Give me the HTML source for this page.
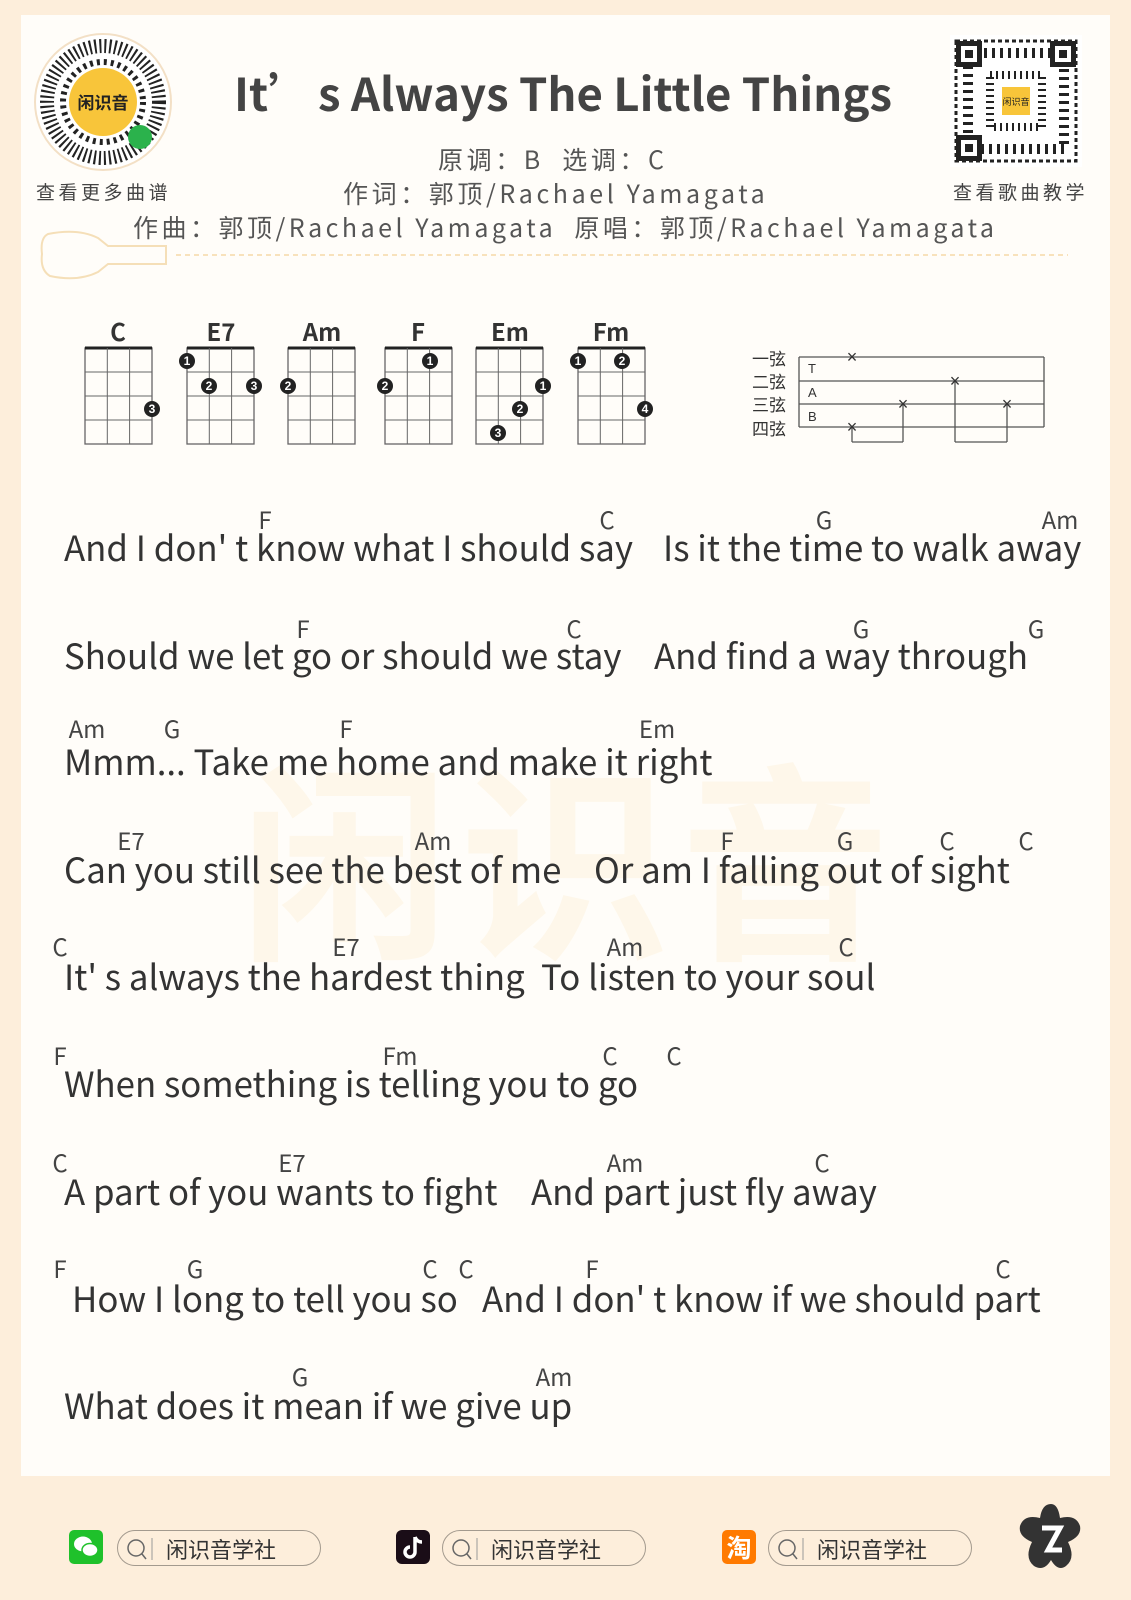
<!DOCTYPE html>
<html><head><meta charset="utf-8"><style>
body{margin:0;width:1131px;height:1600px;background:#fdeedb;position:relative;overflow:hidden;font-family:"Liberation Sans","Noto Sans CJK SC",sans-serif;}
.panel{position:absolute;left:21px;top:15px;width:1089px;height:1461px;background:#fffdf9;}
.t{position:absolute;white-space:nowrap;font-family:"Noto Sans CJK SC",sans-serif;color:#333;}
.ly{font-size:34.8px;line-height:40px;margin-top:10px;}
.ch{font-size:24px;line-height:28px;color:#444;transform:translateX(-50%);margin-top:9px;}
.hd{font-size:25px;color:#555;letter-spacing:3.6px;}
.pill{position:absolute;width:204px;height:36px;border:1.5px solid #a39a8e;border-radius:20px;box-sizing:border-box;}
.pill span{position:absolute;left:48px;top:2px;font-family:"Noto Sans CJK SC",sans-serif;font-size:22px;color:#333;}
</style></head><body>
<div class="panel"></div>
<div class="t" style="left:240px;top:700px;font-size:210px;color:rgba(250,205,140,0.13);font-weight:bold;letter-spacing:10px">闲识音</div>

<svg style="position:absolute;left:34px;top:33px" width="138" height="138">
<circle cx="69" cy="69" r="68" fill="#fff" stroke="#f3e0c6" stroke-width="2"/>
<circle cx="69" cy="69" r="56" fill="none" stroke="#222" stroke-width="14" stroke-dasharray="2 3"/>
<circle cx="69" cy="69" r="40" fill="none" stroke="#222" stroke-width="6" stroke-dasharray="3 4"/>
<circle cx="69" cy="69" r="34" fill="#f8c53a"/>
<text x="69" y="76" text-anchor="middle" font-family="Noto Sans CJK SC" font-size="17" font-weight="bold" fill="#222">闲识音</text>
<circle cx="106" cy="104" r="12" fill="#2bb24c"/>
</svg>
<div class="t" style="left:36px;top:178px;font-size:19px;color:#444;letter-spacing:3.5px">查看更多曲谱</div>
<svg style="position:absolute;left:950px;top:35px" width="132" height="132">
<rect width="132" height="132" fill="#fff"/>
<rect x="6" y="6" width="120" height="120" fill="none" stroke="#222" stroke-width="3" stroke-dasharray="4 3"/>
<rect x="18" y="18" width="96" height="96" fill="none" stroke="#222" stroke-width="10" stroke-dasharray="3 5"/>
<rect x="40" y="40" width="52" height="52" fill="none" stroke="#222" stroke-width="8" stroke-dasharray="2 4"/>
<rect x="6" y="6" width="26" height="26" fill="#222"/><rect x="11" y="11" width="16" height="16" fill="#fff"/><rect x="15" y="15" width="8" height="8" fill="#222"/>
<rect x="100" y="6" width="26" height="26" fill="#222"/><rect x="105" y="11" width="16" height="16" fill="#fff"/><rect x="109" y="15" width="8" height="8" fill="#222"/>
<rect x="6" y="100" width="26" height="26" fill="#222"/><rect x="11" y="105" width="16" height="16" fill="#fff"/><rect x="15" y="109" width="8" height="8" fill="#222"/>
<rect x="52" y="52" width="28" height="28" fill="#f8c53a"/>
<text x="66" y="70" text-anchor="middle" font-family="Noto Sans CJK SC" font-size="9" fill="#222">闲识音</text>
</svg>
<div class="t" style="left:953px;top:178px;font-size:19px;color:#444;letter-spacing:3.5px">查看歌曲教学</div>

<div class="t" style="left:234px;top:59px;font-size:45.5px;font-weight:bold;color:#444">It’<span style="margin-left:-6px"> </span>s Always The Little Things</div>
<div class="t hd" style="left:438px;top:141px">原调：B&nbsp; 选调：C</div>
<div class="t hd" style="left:343px;top:175px">作词：郭顶/Rachael Yamagata</div>
<div class="t hd" style="left:133px;top:209px;letter-spacing:3.5px">作曲：郭顶/Rachael Yamagata&nbsp; 原唱：郭顶/Rachael Yamagata</div>
<svg style="position:absolute;left:38px;top:228px" width="1060" height="56">
<path d="M10 6 Q2 10 4 26 Q2 42 12 48 Q40 54 60 44 L70 36 L128 36 L128 18 L70 18 L60 10 Q40 0 10 6Z" fill="none" stroke="#f5dfb8" stroke-width="2"/>
<line x1="138" y1="27" x2="1030" y2="27" stroke="#f5d9a8" stroke-width="1.5" stroke-dasharray="5 4"/>
</svg>

<svg style="position:absolute;left:0;top:308px" width="1131" height="150">
<defs>
<g id="gr"><rect x="0" y="40" width="67" height="96" fill="none" stroke="#666" stroke-width="1.3"/><line x1="0" y1="40" x2="67" y2="40" stroke="#222" stroke-width="3"/>
<line x1="22.3" y1="40" x2="22.3" y2="136" stroke="#666"/><line x1="44.6" y1="40" x2="44.6" y2="136" stroke="#666"/>
<line x1="0" y1="64" x2="67" y2="64" stroke="#666"/><line x1="0" y1="88" x2="67" y2="88" stroke="#666"/><line x1="0" y1="112" x2="67" y2="112" stroke="#666"/></g>
</defs>
<g font-family="Noto Sans CJK SC" font-weight="bold" font-size="24" fill="#333" text-anchor="middle">
<use href="#gr" x="85"/><text x="118" y="33">C</text>
<use href="#gr" x="187"/><text x="221" y="33">E7</text>
<use href="#gr" x="288"/><text x="322" y="33">Am</text>
<use href="#gr" x="385"/><text x="418" y="33">F</text>
<use href="#gr" x="476"/><text x="510" y="33">Em</text>
<use href="#gr" x="578"/><text x="611" y="33">Fm</text>
</g>
<g fill="#222"><circle cx="152" cy="101" r="8"/><circle cx="187" cy="53" r="8"/><circle cx="209" cy="78" r="8"/><circle cx="254" cy="78" r="8"/><circle cx="288" cy="78" r="8"/><circle cx="430" cy="53" r="8"/><circle cx="385" cy="78" r="8"/><circle cx="543" cy="78" r="8"/><circle cx="520" cy="101" r="8"/><circle cx="498" cy="125" r="8"/><circle cx="578" cy="53" r="8"/><circle cx="622" cy="53" r="8"/><circle cx="645" cy="101" r="8"/></g>
<g fill="#fff" font-family="Liberation Sans" font-weight="bold" font-size="12" text-anchor="middle">
<text x="152" y="105">3</text><text x="187" y="57">1</text><text x="209" y="82">2</text><text x="254" y="82">3</text><text x="288" y="82">2</text><text x="430" y="57">1</text><text x="385" y="82">2</text><text x="543" y="82">1</text><text x="520" y="105">2</text><text x="498" y="129">3</text><text x="578" y="57">1</text><text x="622" y="57">2</text><text x="645" y="105">4</text></g>
<g transform="translate(0,7)">
<g stroke="#555" stroke-width="1.3"><line x1="799" y1="42" x2="1044" y2="42"/><line x1="799" y1="66" x2="1044" y2="66"/><line x1="799" y1="89" x2="1044" y2="89"/><line x1="799" y1="112" x2="1044" y2="112"/><line x1="799" y1="42" x2="799" y2="112"/><line x1="1044" y1="42" x2="1044" y2="112"/>
<line x1="852" y1="112" x2="852" y2="127"/><line x1="852" y1="127" x2="903" y2="127"/><line x1="903" y1="89" x2="903" y2="127"/>
<line x1="955" y1="66" x2="955" y2="127"/><line x1="955" y1="127" x2="1007" y2="127"/><line x1="1007" y1="89" x2="1007" y2="127"/></g>
<g font-family="Liberation Sans" font-size="18" fill="#333" text-anchor="middle"><text x="852" y="48">×</text><text x="955" y="72">×</text><text x="903" y="95">×</text><text x="1007" y="95">×</text><text x="852" y="118">×</text></g>
<g font-family="Liberation Sans" font-size="13" fill="#333"><text x="808" y="58">T</text><text x="808" y="82">A</text><text x="808" y="106">B</text></g>
<g font-family="Noto Sans CJK SC" font-size="17" fill="#333"><text x="752" y="50">一弦</text><text x="752" y="73">二弦</text><text x="752" y="96">三弦</text><text x="752" y="120">四弦</text></g>
</g>
</svg>

<div class="t ly" style="left:64px;top:517px">And I don' t know what I should say</div>
<div class="t ly" style="left:663px;top:517px">Is it the time to walk away</div>
<div class="t ch" style="left:265px;top:496px">F</div><div class="t ch" style="left:607px;top:496px">C</div><div class="t ch" style="left:824px;top:496px">G</div><div class="t ch" style="left:1060px;top:496px">Am</div>

<div class="t ly" style="left:64px;top:625px">Should we let go or should we stay</div>
<div class="t ly" style="left:654px;top:625px">And find a way through</div>
<div class="t ch" style="left:303px;top:605px">F</div><div class="t ch" style="left:574px;top:605px">C</div><div class="t ch" style="left:861px;top:605px">G</div><div class="t ch" style="left:1036px;top:605px">G</div>

<div class="t ly" style="left:64px;top:731px">Mmm... Take me home and make it right</div>
<div class="t ch" style="left:87px;top:705px">Am</div><div class="t ch" style="left:172px;top:705px">G</div><div class="t ch" style="left:346px;top:705px">F</div><div class="t ch" style="left:657px;top:705px">Em</div>

<div class="t ly" style="left:64px;top:839px">Can you still see the best of me</div>
<div class="t ly" style="left:594px;top:839px">Or am I falling out of sight</div>
<div class="t ch" style="left:131px;top:817px">E7</div><div class="t ch" style="left:433px;top:817px">Am</div><div class="t ch" style="left:727px;top:817px">F</div><div class="t ch" style="left:845px;top:817px">G</div><div class="t ch" style="left:947px;top:817px">C</div><div class="t ch" style="left:1026px;top:817px">C</div>

<div class="t ly" style="left:64px;top:946px">It' s always the hardest thing</div>
<div class="t ly" style="left:541px;top:946px">To listen to your soul</div>
<div class="t ch" style="left:60px;top:923px">C</div><div class="t ch" style="left:346px;top:923px">E7</div><div class="t ch" style="left:625px;top:923px">Am</div><div class="t ch" style="left:846px;top:923px">C</div>

<div class="t ly" style="left:64px;top:1053px">When something is telling you to go</div>
<div class="t ch" style="left:60px;top:1032px">F</div><div class="t ch" style="left:400px;top:1032px">Fm</div><div class="t ch" style="left:610px;top:1032px">C</div><div class="t ch" style="left:674px;top:1032px">C</div>

<div class="t ly" style="left:64px;top:1161px">A part of you wants to fight</div>
<div class="t ly" style="left:531px;top:1161px">And part just fly away</div>
<div class="t ch" style="left:60px;top:1139px">C</div><div class="t ch" style="left:292px;top:1139px">E7</div><div class="t ch" style="left:625px;top:1139px">Am</div><div class="t ch" style="left:822px;top:1139px">C</div>

<div class="t ly" style="left:72px;top:1268px">How I long to tell you so</div>
<div class="t ly" style="left:482px;top:1268px">And I don' t know if we should part</div>
<div class="t ch" style="left:60px;top:1245px">F</div><div class="t ch" style="left:195px;top:1245px">G</div><div class="t ch" style="left:430px;top:1245px">C</div><div class="t ch" style="left:466px;top:1245px">C</div><div class="t ch" style="left:592px;top:1245px">F</div><div class="t ch" style="left:1003px;top:1245px">C</div>

<div class="t ly" style="left:64px;top:1375px">What does it mean if we give up</div>
<div class="t ch" style="left:300px;top:1353px">G</div><div class="t ch" style="left:554px;top:1353px">Am</div>

<svg style="position:absolute;left:69px;top:1530px" width="34" height="34"><rect width="34" height="34" rx="5" fill="#1fc12b"/><ellipse cx="14" cy="14" rx="9" ry="7.5" fill="#fff"/><ellipse cx="21" cy="20" rx="8" ry="6.5" fill="#fff" stroke="#1fc12b" stroke-width="1.5"/></svg>
<div class="pill" style="left:117px;top:1530px"><svg style="position:absolute;left:8px;top:7px" width="28" height="22"><circle cx="10" cy="10" r="8" fill="none" stroke="#666" stroke-width="1.5"/><line x1="16" y1="16" x2="20" y2="21" stroke="#666" stroke-width="1.5"/><line x1="26" y1="0" x2="26" y2="22" stroke="#999"/></svg><span>闲识音学社</span></div>
<svg style="position:absolute;left:396px;top:1530px" width="34" height="34"><rect width="34" height="34" rx="6" fill="#1a0d17"/><path d="M19 7 v15 a5 5 0 1 1 -5 -5 M19 7 q2 5 7 5" fill="none" stroke="#fff" stroke-width="3.5"/></svg>
<div class="pill" style="left:442px;top:1530px"><svg style="position:absolute;left:8px;top:7px" width="28" height="22"><circle cx="10" cy="10" r="8" fill="none" stroke="#666" stroke-width="1.5"/><line x1="16" y1="16" x2="20" y2="21" stroke="#666" stroke-width="1.5"/><line x1="26" y1="0" x2="26" y2="22" stroke="#999"/></svg><span>闲识音学社</span></div>
<div style="position:absolute;left:722px;top:1530px;width:34px;height:34px;border-radius:5px;background:#ff7a00;color:#fff;font:bold 25px 'Noto Sans CJK SC';text-align:center;line-height:34px">淘</div>
<div class="pill" style="left:768px;top:1530px"><svg style="position:absolute;left:8px;top:7px" width="28" height="22"><circle cx="10" cy="10" r="8" fill="none" stroke="#666" stroke-width="1.5"/><line x1="16" y1="16" x2="20" y2="21" stroke="#666" stroke-width="1.5"/><line x1="26" y1="0" x2="26" y2="22" stroke="#999"/></svg><span>闲识音学社</span></div>
<svg style="position:absolute;left:1018px;top:1502px" width="66" height="72"><path d="M33 2 Q40 2 42 16 Q58 12 62 24 Q64 34 50 40 Q58 56 48 64 Q40 70 33 58 Q26 70 16 64 Q6 56 14 40 Q0 34 2 24 Q6 12 22 16 Q24 2 33 2Z" fill="#333"/><path d="M24 26 H42 L30 48 H44" fill="none" stroke="#fff" stroke-width="5"/></svg>
</body></html>
